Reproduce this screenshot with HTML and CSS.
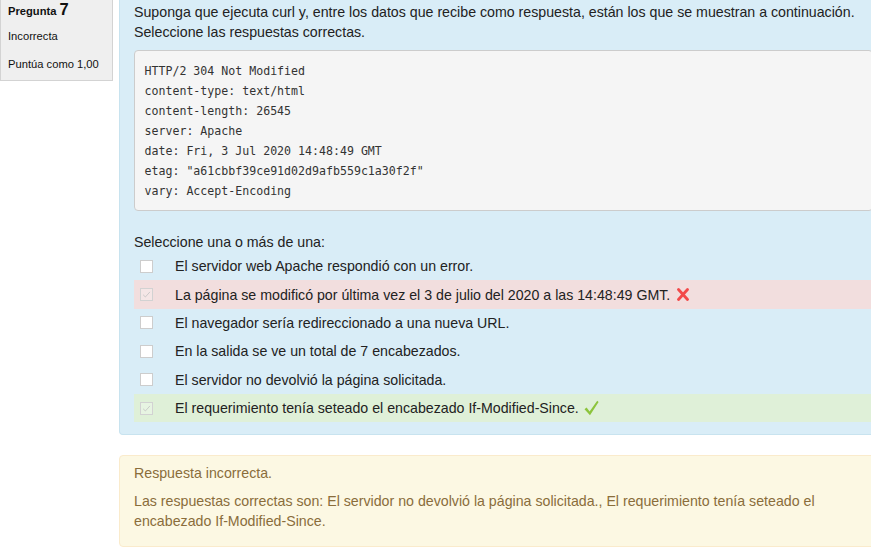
FILE: index.html
```html
<!DOCTYPE html>
<html lang="es">
<head>
<meta charset="utf-8">
<title>Pregunta 7</title>
<link rel="stylesheet" href="styles.css">
</head>
<body>
<div class="que">
  <div class="info">
    <div class="no">Pregunta <span class="qno">7</span></div>
    <div class="state">Incorrecta</div>
    <div class="grade">Puntúa como 1,00</div>
  </div>
  <div class="content">
    <div class="formulation">
      <p class="qtext">Suponga que ejecuta curl y, entre los datos que recibe como respuesta, están los que se muestran a continuación. Seleccione las respuestas correctas.</p>
      <pre class="code">HTTP/2 304 Not Modified
content-type: text/html
content-length: 26545
server: Apache
date: Fri, 3 Jul 2020 14:48:49 GMT
etag: "a61cbbf39ce91d02d9afb559c1a30f2f"
vary: Accept-Encoding</pre>
      <div class="prompt">Seleccione una o más de una:</div>
      <div class="answer">
        <div class="opt"><span class="cb"></span><span class="lbl">El servidor web Apache respondió con un error.</span></div>
        <div class="opt incorrect"><span class="cb checked"><svg viewBox="0 0 13 13" width="11" height="11"><path d="M2.5 6.8 L5.2 9.4 L10.6 3.4" fill="none" stroke="#c4c4c4" stroke-width="1"/></svg></span><span class="lbl">La página se modificó por última vez el 3 de julio del 2020 a las 14:48:49 GMT.</span><svg class="mark" viewBox="0 0 12 13" width="12" height="13"><path d="M1.5 1.5 L10.5 11.5 M10.5 1.5 L1.5 11.5" stroke="#f24a4a" stroke-width="2.8" stroke-linecap="round"/></svg></div>
        <div class="opt"><span class="cb"></span><span class="lbl">El navegador sería redireccionado a una nueva URL.</span></div>
        <div class="opt"><span class="cb"></span><span class="lbl">En la salida se ve un total de 7 encabezados.</span></div>
        <div class="opt"><span class="cb"></span><span class="lbl">El servidor no devolvió la página solicitada.</span></div>
        <div class="opt correct"><span class="cb checked"><svg viewBox="0 0 13 13" width="11" height="11"><path d="M2.5 6.8 L5.2 9.4 L10.6 3.4" fill="none" stroke="#c4c4c4" stroke-width="1"/></svg></span><span class="lbl">El requerimiento tenía seteado el encabezado If-Modified-Since.</span><svg class="mark check" viewBox="0 0 15 16" width="15" height="16"><path d="M0.5 9.2 L2.6 7.6 L5.6 11.4 L13.2 0.8 L14.6 2 L6 15.2 Z" fill="#8cc43c"/></svg></div>
      </div>
    </div>
    <div class="outcome">
      <p>Respuesta incorrecta.</p>
      <p>Las respuestas correctas son: El servidor no devolvió la página solicitada., El requerimiento tenía seteado el encabezado If-Modified-Since.</p>
    </div>
  </div>
</div>
</body>
</html>
```

FILE: styles.css
```css
html, body {
  margin: 0;
  padding: 0;
  overflow: hidden;
  background: #fff;
}

body {
  font-family: "Liberation Sans", Arial, sans-serif;
  font-size: 14.2px;
  line-height: 20px;
  color: #222;
}

.que {
  display: flex;
  align-items: flex-start;
  gap: 6px;
  width: 900px;
}

.info {
  flex: 0 0 auto;
  box-sizing: border-box;
  width: 113px;
  background: #efefef;
  border: 1px solid #d3d3d3;
  border-top: none;
  padding: 1px 4px 6px 7px;
  font-size: 11.2px;
  line-height: 20px;
  color: #111;
}

.no {
  font-weight: bold;
}

.qno {
  font-size: 16.5px;
  line-height: 1;
}

.state {
  margin-top: 5px;
}

.grade {
  margin-top: 8px;
}

.content {
  flex: 0 0 auto;
  width: 770px;
}

.formulation {
  background: #d9edf7;
  border: 1px solid #c8e3ef;
  border-top: none;
  border-radius: 0 0 4px 4px;
  padding: 2px 15px 12px 14px;
}

.qtext {
  margin: 0 0 8px;
}

.code {
  margin: 0 0 21px;
  padding: 9.5px;
  background: #f5f5f5;
  border: 1px solid #ccc;
  border-radius: 4px;
  font-family: "DejaVu Sans Mono", "Liberation Mono", monospace;
  font-size: 11.6px;
  line-height: 20px;
  color: #333;
  white-space: pre;
}

.opt {
  display: flex;
  align-items: center;
  padding: 4.2px 6px;
}

.opt.incorrect {
  background: #f2dede;
}

.opt.correct {
  background: #dff0d8;
}

.cb {
  flex: 0 0 auto;
  box-sizing: border-box;
  width: 13px;
  height: 13px;
  border: 1px solid #cdcdcd;
  background: #fff;
  margin-right: 22px;
  display: flex;
  align-items: center;
  justify-content: center;
}

.cb.checked {
  background: rgba(255, 255, 255, 0.25);
  border-color: #d2d2d2;
}

.mark {
  flex: 0 0 auto;
  margin-left: 7px;
}

.mark.check {
  margin-left: 5px;
}

.outcome {
  margin-top: 20px;
  background: #fcf8e3;
  border: 1px solid #faebcc;
  border-radius: 4px;
  padding: 7px 15px 15px 14px;
  color: #8a6d3b;
}

.outcome p {
  margin: 0 0 8px;
}

.outcome p:last-child {
  margin-bottom: 0;
}
```
